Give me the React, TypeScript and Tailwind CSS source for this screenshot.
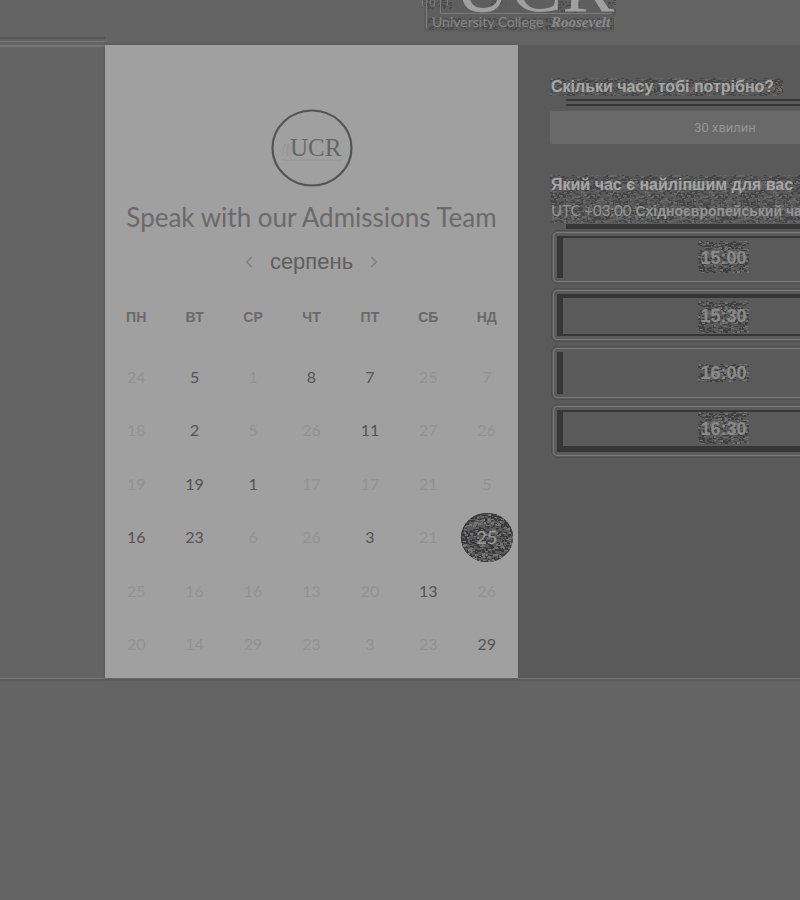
import { ChevronLeft, ChevronRight } from "lucide-react";

const weekdays = ["ПН", "ВТ", "СР", "ЧТ", "ПТ", "СБ", "НД"];

type Day = { n: number; open?: boolean; selected?: boolean };
const d = (n: number): Day => ({ n });
const o = (n: number): Day => ({ n, open: true });

const days: Day[] = [
  d(24), o(5), d(1), o(8), o(7), d(25), d(7),
  d(18), o(2), d(5), d(26), o(11), d(27), d(26),
  d(19), o(19), o(1), d(17), d(17), d(21), d(5),
  o(16), o(23), d(6), d(26), o(3), d(21), { n: 25, open: true, selected: true },
  d(25), d(16), d(16), d(13), d(20), o(13), d(26),
  d(20), d(14), d(29), d(23), d(3), d(23), o(29),
];

const times = ["15:00", "15:30", "16:00", "16:30"];

// Deterministic grain, split into a dark and a light layer.
function grain(seed: number, size: number, share: number) {
  let s = seed;
  const next = () => {
    s = (s * 16807) % 2147483647;
    return s / 2147483647;
  };
  let path = "";
  for (let y = 0; y < size; y += 1) {
    for (let x = 0; x < size; x += 2) {
      if (next() < share) {
        const left = x + Math.floor(next() * 2);
        const w = next() < 0.5 ? 2 : 3;
        const h = next() < 0.4 ? 2 : 1;
        path += `M${left} ${y}h${w}v${h}h-${w}z`;
      }
    }
  }
  return path;
}
const darkGrain = grain(4711, 64, 0.28);
const lightGrain = grain(977, 64, 0.12);

function Speckle({ id, className }: { id: string; className: string }) {
  return (
    <svg aria-hidden="true" className={`pointer-events-none absolute ${className}`} shapeRendering="crispEdges">
      <defs>
        <pattern id={id} width="64" height="64" patternUnits="userSpaceOnUse">
          <path d={darkGrain} fill="#3a3a3a" />
          <path d={lightGrain} fill="#767676" />
        </pattern>
      </defs>
      <rect width="100%" height="100%" fill={`url(#${id})`} />
    </svg>
  );
}

function Header() {
  return (
    <header className="h-[45px] overflow-hidden">
      <svg viewBox="0 0 198 34" className="ml-[420px] h-[34px] w-[198px]" role="img" aria-label="UCR University College Roosevelt">
        <defs>
          <pattern id="logo-grain" width="64" height="64" patternUnits="userSpaceOnUse">
            <path d={darkGrain} fill="#424242" />
          </pattern>
        </defs>
        <rect x="4" width="190" height="32" fill="#5e5e5e" />
        <path d="M2 0h30v9H2zM138 0h22v13h-22zM188 0h8v16h-8zM8 18h186v12H8zM70 0h16v5H70z" fill="url(#logo-grain)" opacity="0.6" />
        <path d="M2.500 0v6M6.500 0v28M20.500 0v13.500H192M10.500 0v6h4V0M27.500 0v6" fill="none" stroke="#7b7b7b" />
        <text x="34" y="11" fontSize="78" fontFamily="Liberation Serif, serif" fill="#a0a0a0">UCR</text>
        <text x="12" y="27" fontSize="14" fontFamily="Lato, sans-serif" fill="#858585">University College</text>
        <text x="131" y="27" fontSize="15" fontWeight="bold" fontStyle="italic" fontFamily="Liberation Serif, serif" fill="#8b8b8b">Roosevelt</text>
      </svg>
    </header>
  );
}

function CalendarCard() {
  return (
    <section className="flex w-[413px] shrink-0 flex-col items-center bg-[#a0a0a0] px-0.5 pb-[7px] pt-[64px] shadow-[0_0_3px_#505050]">
      <svg viewBox="0 0 82 78" className="h-[78px] w-[82px]" role="img" aria-label="UCR">
        <ellipse cx="41" cy="39" rx="39.500" ry="37.500" fill="none" stroke="#545454" strokeWidth="2.200" />
        <path d="M12 47V40l2-5 2 5v8M17 47V34l2 4v9" fill="none" stroke="#969696" />
        <text x="19" y="47" fontSize="25" fontFamily="Liberation Serif, serif" fill="#666666">UCR</text>
        <path d="M11 51h59" stroke="#929292" strokeDasharray="3 1" />
      </svg>
      <h1 className="mt-[13px] whitespace-nowrap font-['Lato',sans-serif] text-[26px] leading-[34px] text-[#6a6a6a]">
        Speak with our Admissions Team
      </h1>
      <div className="mt-[12px] flex h-8 items-center gap-[12px]">
        <button type="button" aria-label="Попередній місяць" className="text-[#7d7d7d]">
          <ChevronLeft size={18} strokeWidth={2} />
        </button>
        <h2 className="text-[22px] leading-8 text-[#5e5e5e]">серпень</h2>
        <button type="button" aria-label="Наступний місяць" className="text-[#7d7d7d]">
          <ChevronRight size={18} strokeWidth={2} />
        </button>
      </div>
      <div className="mt-[29px] grid w-full grid-cols-7 text-center text-[14px] font-bold leading-5 text-[#6a6a6a]">
        {weekdays.map((w) => (
          <span key={w}>{w}</span>
        ))}
      </div>
      <div className="mt-[23px] grid h-[321px] w-full grid-cols-7 grid-rows-6 font-['Lato',sans-serif] text-[16px]">
        {days.map((day, i) => (
          <div key={i} className="flex items-center justify-center">
            {day.selected ? (
              <button type="button" aria-pressed="true" className="relative h-[49px] w-[52px] shrink-0 overflow-hidden rounded-[50%] bg-[#5a5a5a] text-[18px] text-[#999999] ring-1 ring-inset ring-[#3a3a3a]">
                <Speckle id="day-grain" className="inset-0 h-full w-full" />
                <span className="relative">{day.n}</span>
              </button>
            ) : (
              <button type="button" disabled={!day.open} className={day.open ? "text-[#545454]" : "text-[#929292]"}>
                {day.n}
              </button>
            )}
          </div>
        ))}
      </div>
    </section>
  );
}

const slotEdges = [
  "border-t-2 border-[#363636]",
  "border-t-4 border-b-2 border-[#363636]",
  "border-[#363636]",
  "border-t-2 border-b-[6px] border-[#363636]",
];
const slotGrain = ["-top-1 h-8", "-top-0.5 h-8", "top-1 h-[18px]", "-top-1 h-8"];

function TimeSlot({ time, index }: { time: string; index: number }) {
  return (
    <button type="button" className="h-[50px] w-full rounded-[4px] border border-[#7a7a7a] p-[3px] text-[18px] font-bold text-[#8a8a8a] outline outline-1 outline-offset-1 outline-[#505050]">
      <span className={`flex h-full items-center justify-center border-l-[6px] ${slotEdges[index]}`}>
        <span className="relative">
          <Speckle id={`slot-grain-${index}`} className={`-left-0.5 w-[51px] opacity-80 ${slotGrain[index]}`} />
          <span className="relative">{time}</span>
        </span>
      </span>
    </button>
  );
}

function BookingPanel() {
  return (
    <section className="min-w-[382px] flex-1 bg-[#5a5a5a] pl-[32px] pt-[30px]">
      <div className="w-[350px]">
        <h2 className="relative whitespace-nowrap pl-px text-[16px] font-bold leading-6 text-[#a6a6a6]">
          <Speckle id="duration-grain" className="left-0 top-[3px] h-[18px] w-[233px] opacity-60" />
          <span className="relative">Скільки часу тобі потрібно?</span>
        </h2>
        <div className="ml-4 h-[7px] border-y-2 border-[#363636]" />
        <button type="button" className="mt-[5px] h-[33px] w-full rounded-[2px] bg-[#696969] font-['Roboto',sans-serif] text-[13px] text-[#949494]">
          30 хвилин
        </button>
        <div className="relative mt-[29px] whitespace-nowrap pl-px">
          <Speckle id="zone-grain" className="left-0 top-0.5 h-[48px] w-full opacity-60" />
          <h2 className="relative text-[16px] font-bold leading-6 text-[#a6a6a6]">Який час є найліпшим для вас</h2>
          <p className="relative text-[14px] font-bold leading-[26px] text-[#949494]">
            <span className="font-['Lato',sans-serif] text-[15px] font-normal">UTC +03:00</span> Східноєвропейський час
          </p>
        </div>
        <div className="ml-4 h-[5px] bg-[#363636]" />
        <div className="-mr-[3px] mt-[3px] flex w-[338px] flex-col gap-2 pl-[3px]">
          {times.map((t, i) => (
            <TimeSlot key={t} time={t} index={i} />
          ))}
        </div>
      </div>
    </section>
  );
}

export default function App() {
  return (
    <div className="min-h-screen overflow-hidden bg-[#646464] font-['Liberation_Sans',Arial,sans-serif]">
      <Header />
      <main className="flex">
        <div className="w-[105px] shrink-0">
          <div className="-mt-[8px] h-[10px] border-y-2 border-t-[#555555] border-b-[#777777]">
            <div className="h-[3px] border-b border-[#777777]" />
          </div>
        </div>
        <CalendarCard />
        <BookingPanel />
      </main>
      <div className="h-[3px] border-t border-[#777777] bg-[#5c5c5c]" />
    </div>
  );
}
